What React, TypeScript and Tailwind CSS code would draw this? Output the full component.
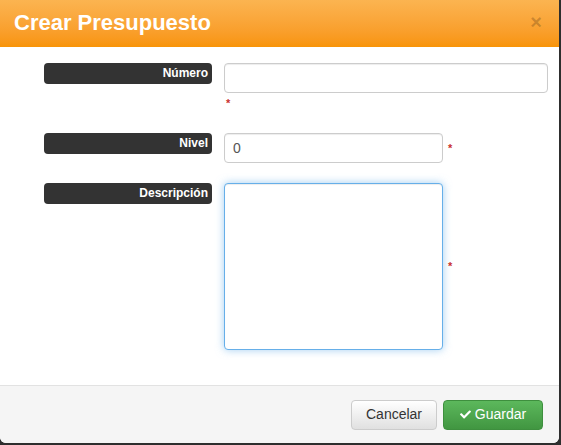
import { FaCheck } from "react-icons/fa";

function Label({ text }: { text: string }) {
  return (
    <div className="w-[168px] h-[21px] shrink-0 rounded-[4px] bg-[#333333] text-white text-[12px] font-bold leading-[21px] text-right pr-[4px]">
      {text}
    </div>
  );
}

const inputCls =
  "h-[30px] rounded-[4px] border border-[#cccccc] bg-white px-[8px] text-[14px] text-[#555555] shadow-[inset_0_1px_1px_rgba(0,0,0,0.075)] outline-none";

const starCls = "text-[11px] font-bold text-[#c9302c] leading-none";

export default function App() {
  return (
    <div className="w-full h-[445px] bg-[#2e2e2e] font-['Liberation_Sans',Arial,sans-serif]">
      <div className="w-[559px] h-[443px] bg-white rounded-b-[6px] flex flex-col overflow-hidden">
        <div className="h-[47px] shrink-0 bg-gradient-to-b from-[#fbb450] to-[#f89406] flex items-center justify-between pl-[14px] pr-[17px]">
          <h3 className="text-white text-[22px] font-bold leading-none pb-[2px]">Crear Presupuesto</h3>
          <span className="text-[20px] font-bold leading-none text-black/20 pb-[3px]">×</span>
        </div>

        <div className="flex-1 pl-[44px] pt-[16px]">
          <div className="flex gap-[12px]">
            <Label text="Número" />
            <div className="flex flex-col">
              <input className={`${inputCls} w-[324px]`} />
              <span className={`${starCls} pl-[2px] pt-[5px]`}>*</span>
            </div>
          </div>

          <div className="flex gap-[12px] mt-[24px]">
            <Label text="Nivel" />
            <div className="flex items-center gap-[5px]">
              <input className={`${inputCls} w-[219px]`} defaultValue="0" />
              <span className={starCls}>*</span>
            </div>
          </div>

          <div className="flex gap-[12px] mt-[20px]">
            <Label text="Descripción" />
            <div className="flex items-center gap-[5px]">
              <textarea className="w-[219px] h-[167px] resize-none rounded-[4px] border border-[#66afe9] bg-white px-[8px] py-[6px] text-[14px] text-[#555555] outline-none shadow-[inset_0_1px_1px_rgba(0,0,0,0.075),0_0_8px_rgba(102,175,233,0.6)]" />
              <span className={starCls}>*</span>
            </div>
          </div>
        </div>

        <div className="h-[58px] shrink-0 border-t border-[#e2e2e2] bg-[#f5f5f5] flex items-center justify-end gap-[6px] pr-[16px]">
          <button className="h-[30px] w-[86px] rounded-[4px] border border-[#cccccc] bg-gradient-to-b from-white to-[#e0e0e0] text-[14px] text-[#333333]">
            Cancelar
          </button>
          <button className="h-[30px] w-[100px] rounded-[4px] border border-[#3e8f3e] bg-gradient-to-b from-[#5cb85c] to-[#419641] text-[14px] text-white flex items-center justify-center gap-[4px]">
            <FaCheck className="w-[11px] h-[11px]" />
            Guardar
          </button>
        </div>
      </div>
    </div>
  );
}
